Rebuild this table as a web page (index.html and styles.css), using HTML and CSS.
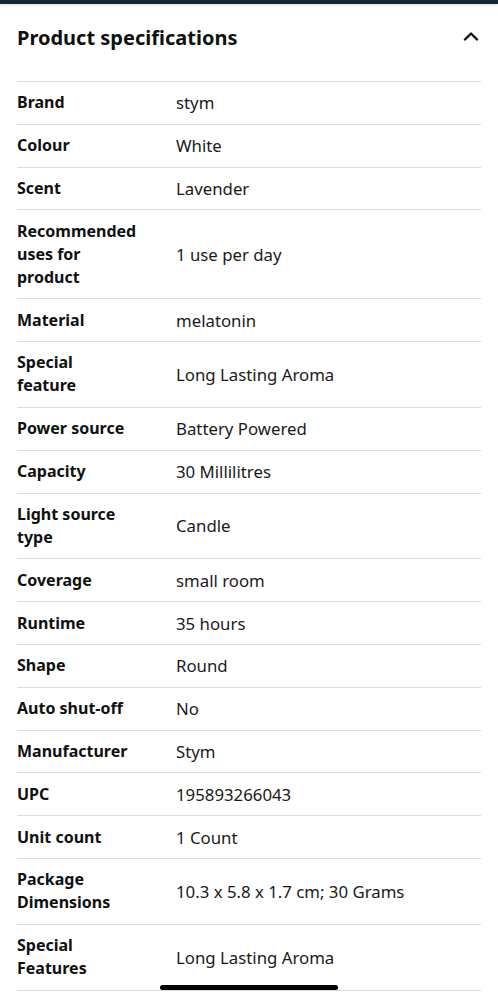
FILE: index.html
```html
<!DOCTYPE html>
<html lang="en">
<head>
    <meta charset="UTF-8">
    <meta name="viewport" content="width=device-width, initial-scale=1.0">
    <title>Product specifications</title>
    <link rel="stylesheet" href="styles.css">
</head>
<body>
    <div class="top-bar"></div>
    <div class="specs">
        <div class="specs-header">
            <h2>Product specifications</h2>
            <svg class="chevron" width="16" height="10" viewBox="0 0 16 10">
                <path d="M2 8.5 L8 2.5 L14 8.5" fill="none" stroke="#111" stroke-width="2.4" stroke-linecap="round" stroke-linejoin="round"/>
            </svg>
        </div>
        <table class="spec-table">
            <tr><th>Brand</th><td>stym</td></tr>
            <tr><th>Colour</th><td>White</td></tr>
            <tr><th>Scent</th><td>Lavender</td></tr>
            <tr><th>Recommended<br>uses for<br>product</th><td>1 use per day</td></tr>
            <tr><th>Material</th><td>melatonin</td></tr>
            <tr><th>Special<br>feature</th><td>Long Lasting Aroma</td></tr>
            <tr><th>Power source</th><td>Battery Powered</td></tr>
            <tr><th>Capacity</th><td>30 Millilitres</td></tr>
            <tr><th>Light source<br>type</th><td>Candle</td></tr>
            <tr><th>Coverage</th><td>small room</td></tr>
            <tr><th>Runtime</th><td>35 hours</td></tr>
            <tr><th>Shape</th><td>Round</td></tr>
            <tr><th>Auto shut-off</th><td>No</td></tr>
            <tr><th>Manufacturer</th><td>Stym</td></tr>
            <tr><th>UPC</th><td>195893266043</td></tr>
            <tr><th>Unit count</th><td>1 Count</td></tr>
            <tr><th>Package<br>Dimensions</th><td>10.3 x 5.8 x 1.7 cm; 30 Grams</td></tr>
            <tr><th>Special<br>Features</th><td>Long Lasting Aroma</td></tr>
        </table>
    </div>
    <div class="home-indicator"></div>
</body>
</html>
```

FILE: styles.css
```css
body {
    font-family: "Noto Sans", Arial, sans-serif;
    background-color: #fff;
    color: #0f1111;
    margin: 0;
    padding: 0;
}
.top-bar {
    height: 4px;
    background-color: #1b2431;
    box-shadow: 0 1px 3px rgba(0, 0, 0, 0.15);
}
.specs {
    padding: 0 17px;
}
.specs-header {
    display: flex;
    align-items: center;
    justify-content: space-between;
    height: 77px;
    border-bottom: 1px solid #dcdcdc;
}
.specs-header h2 {
    margin: 0;
    font-size: 20px;
    font-weight: 700;
    padding-bottom: 10px;
}
.chevron {
    margin-right: 2px;
    margin-bottom: 14px;
}
.spec-table {
    width: 100%;
    border-collapse: collapse;
}
.spec-table tr {
    border-bottom: 1px solid #dcdcdc;
}
.spec-table th,
.spec-table td {
    padding: 9.42px 0;
    font-size: 16px;
    line-height: 23px;
    text-align: left;
    vertical-align: middle;
}
.spec-table th {
    width: 159px;
    padding-right: 20px;
    box-sizing: border-box;
    font-weight: 700;
}
.spec-table td {
    font-size: 16.8px;
    font-weight: 400;
    color: #1a1a1a;
}
.home-indicator {
    position: fixed;
    left: 160px;
    bottom: 10px;
    width: 178px;
    height: 5px;
    border-radius: 3px;
    background-color: #000;
}
```
